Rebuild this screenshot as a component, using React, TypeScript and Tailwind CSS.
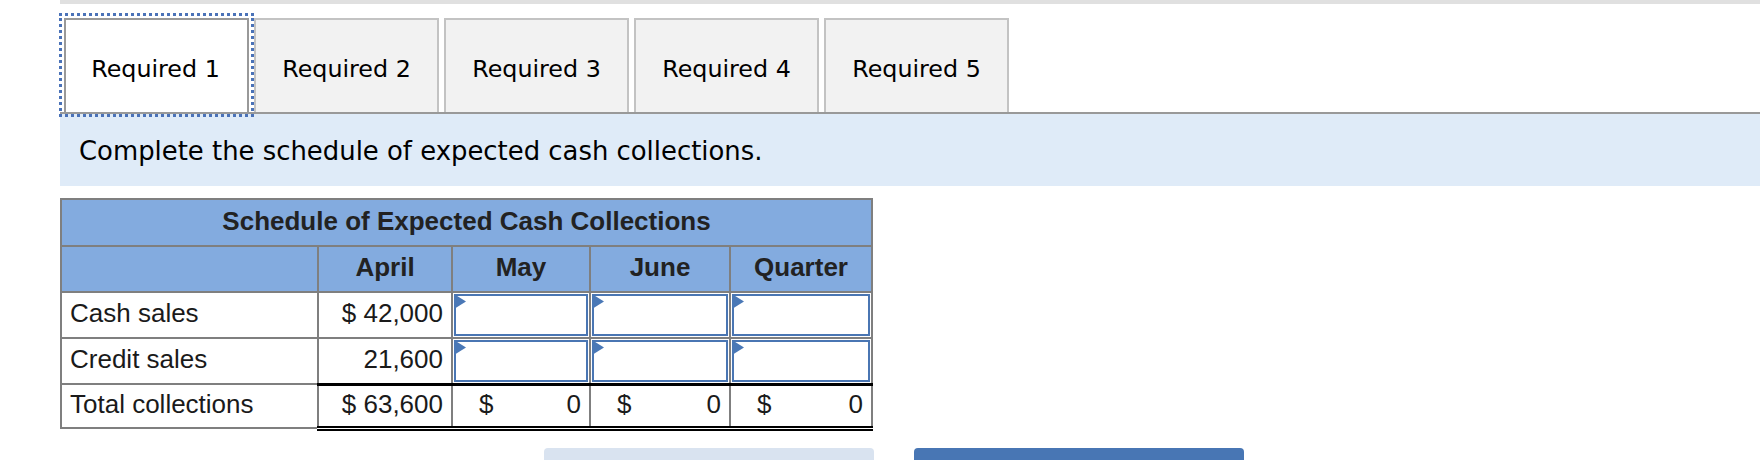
import React from "react";

const tabs = ["Required 1", "Required 2", "Required 3", "Required 4", "Required 5"];

function Marker() {
  return (
    <svg className="absolute -left-[2px] -top-[2px]" width="12" height="15" viewBox="0 0 12 15">
      <polygon points="0,0 12,7.5 0,15" fill="#4a78b6" />
    </svg>
  );
}

function InputCell() {
  return (
    <td className="border-2 border-[#7f7f7f] p-0 px-[1px]">
      <div className="relative h-[42px] border-2 border-[#4a76b3] bg-white">
        <Marker />
      </div>
    </td>
  );
}

function TotalCell({ value }: { value: string }) {
  return (
    <td className="border-2 border-[#7f7f7f] border-t-[3px] border-t-black border-b-[5px] border-b-black [border-bottom-style:double] pl-[26px] pr-[8px] pb-[4px]">
      <div className="flex justify-between">
        <span>$</span>
        <span>{value}</span>
      </div>
    </td>
  );
}

export default function App() {
  return (
    <div className="w-[1760px] h-[460px] overflow-hidden bg-white pl-[60px]">
      <div className="h-[4px] bg-[#e0e0e0]" />

      {/* tabs */}
      <div className="flex gap-[5px] pl-[4px] pt-[14px] border-b-2 border-[#999] font-['DejaVu_Sans',sans-serif] text-[23.8px] text-black">
        {tabs.map((t, i) =>
          i === 0 ? (
            <div
              key={t}
              className="w-[185px] h-[94px] pt-[7px] pr-[2px] flex items-center justify-center bg-white border-2 border-b-0 border-[#999] outline-[3px] outline-dotted outline-[#4a72b8] outline-offset-[2px]"
            >
              {t}
            </div>
          ) : (
            <div
              key={t}
              className="w-[185px] h-[94px] pt-[7px] flex items-center justify-center bg-[#f2f2f2] border-2 border-b-0 border-[#c3c3c3]"
            >
              {t}
            </div>
          )
        )}
      </div>

      {/* instruction */}
      <div className="h-[72px] bg-[#dfebf8] flex items-center pl-[19px] pt-[2px] font-['DejaVu_Sans',sans-serif] text-[25.9px] text-black">
        Complete the schedule of expected cash collections.
      </div>

      {/* schedule */}
      <table className="mt-[12px] w-[811px] table-fixed border-collapse border-2 border-[#7f7f7f] font-['Liberation_Sans',Arial,sans-serif] text-[26px] text-[#1a1a1a] leading-none">
        <colgroup>
          <col className="w-[257px]" />
          <col className="w-[134px]" />
          <col className="w-[138px]" />
          <col className="w-[140px]" />
          <col className="w-[142px]" />
        </colgroup>
        <thead>
          <tr className="h-[47px] bg-[#83abdf]">
            <th colSpan={5} className="border-2 border-[#7f7f7f] pb-[4px] font-bold text-[#222] text-center">
              Schedule of Expected Cash Collections
            </th>
          </tr>
          <tr className="h-[46px] bg-[#83abdf] text-[#222]">
            <th className="border-2 border-[#7f7f7f]" />
            <th className="border-2 border-[#7f7f7f] pb-[4px] font-bold">April</th>
            <th className="border-2 border-[#7f7f7f] pb-[4px] font-bold">May</th>
            <th className="border-2 border-[#7f7f7f] pb-[4px] font-bold">June</th>
            <th className="border-2 border-[#7f7f7f] pb-[4px] font-bold">Quarter</th>
          </tr>
        </thead>
        <tbody>
          <tr className="h-[46px]">
            <td className="border-2 border-[#7f7f7f] pl-[8px] pb-[4px]">Cash sales</td>
            <td className="border-2 border-[#7f7f7f] pr-[8px] pb-[4px] text-right">$ 42,000</td>
            <InputCell />
            <InputCell />
            <InputCell />
          </tr>
          <tr className="h-[46px]">
            <td className="border-2 border-[#7f7f7f] pl-[8px] pb-[4px]">Credit sales</td>
            <td className="border-2 border-[#7f7f7f] pr-[8px] pb-[4px] text-right">21,600</td>
            <InputCell />
            <InputCell />
            <InputCell />
          </tr>
          <tr className="h-[44px]">
            <td className="border-2 border-[#7f7f7f] pl-[8px] pb-[4px]">Total collections</td>
            <td className="border-2 border-[#7f7f7f] border-t-[3px] border-t-black border-b-[5px] border-b-black [border-bottom-style:double] pr-[8px] pb-[4px] text-right">
              $ 63,600
            </td>
            <TotalCell value="0" />
            <TotalCell value="0" />
            <TotalCell value="0" />
          </tr>
        </tbody>
      </table>

      {/* navigation buttons */}
      <div className="mt-[17px] flex gap-[40px] pl-[484px]">
        <div className="w-[330px] h-[40px] rounded-t-[4px] bg-[#d9e3f0]" />
        <div className="w-[330px] h-[40px] rounded-t-[4px] bg-[#4876b4]" />
      </div>
    </div>
  );
}
